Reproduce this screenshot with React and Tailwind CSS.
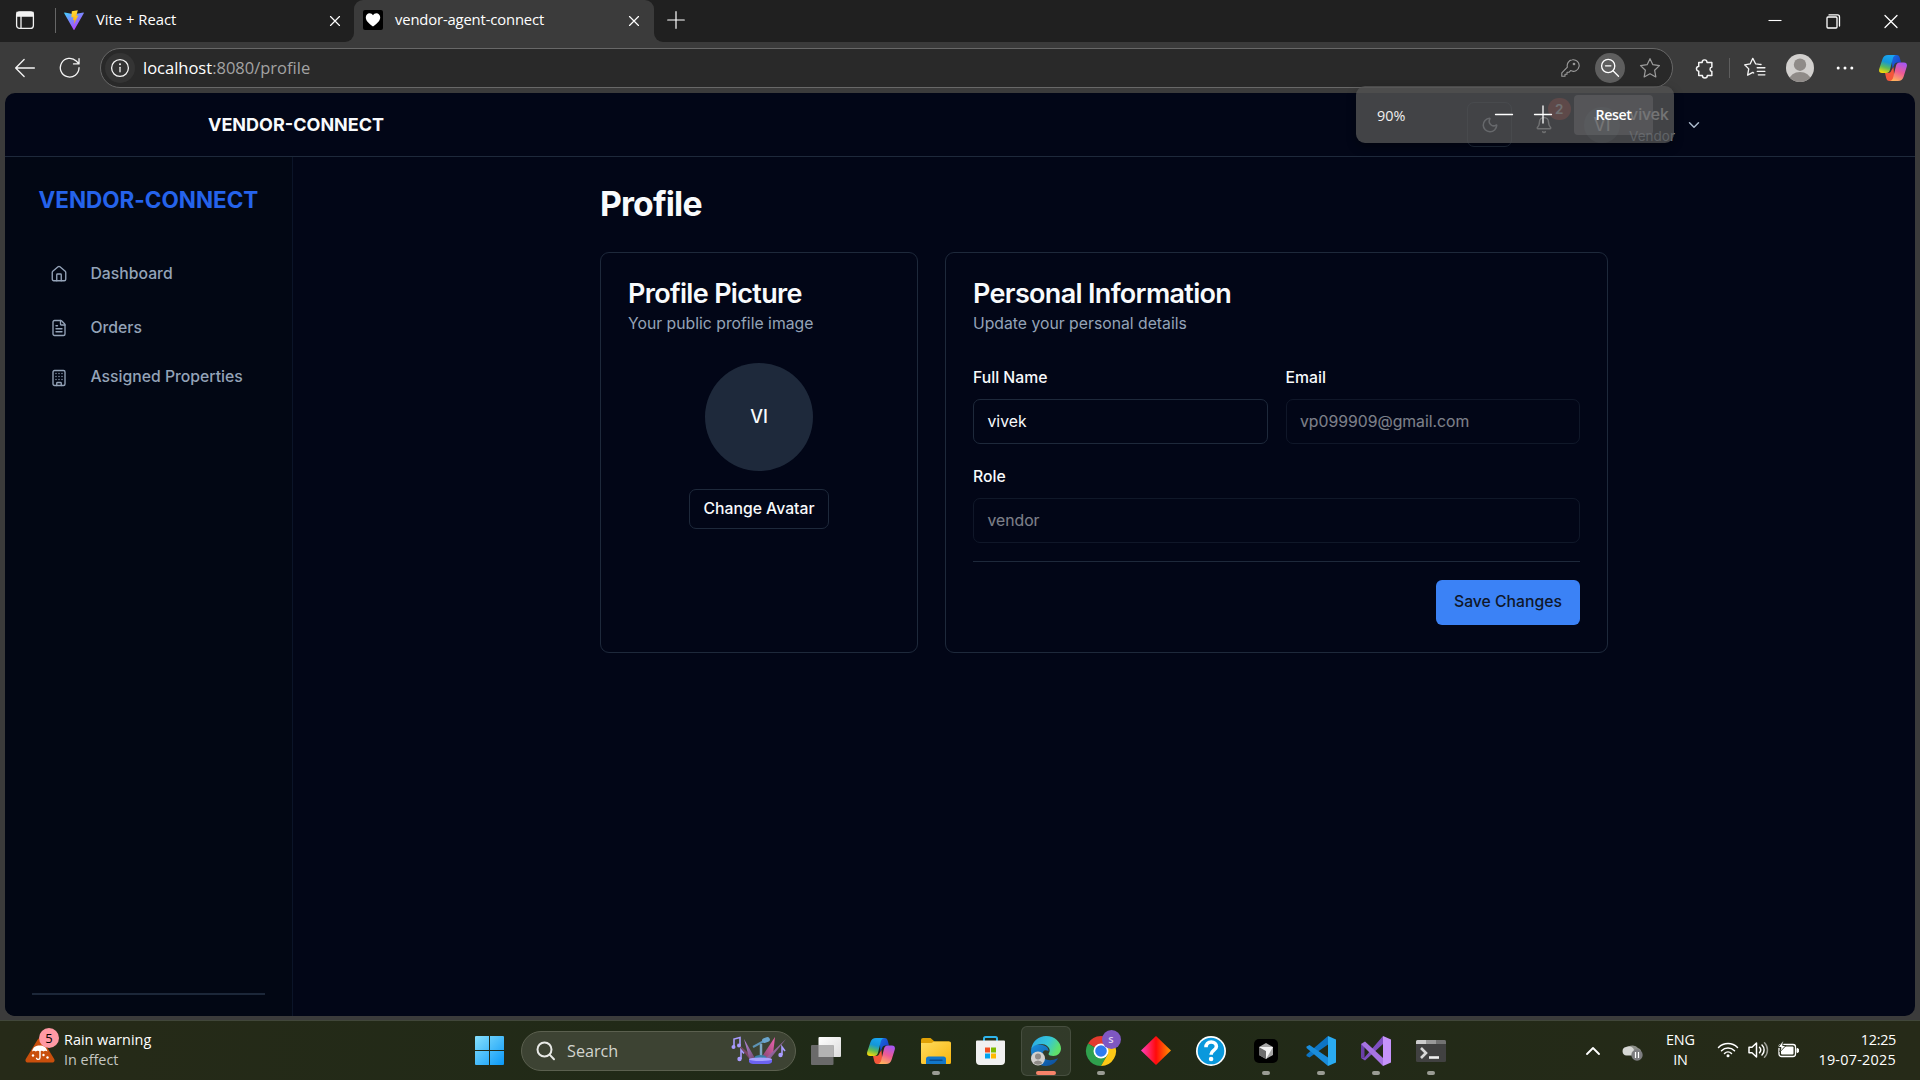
import React from "react";
import { House, FileText, Building, Moon, Bell, ChevronDown } from "lucide-react";

function Line({ size = 20, w = 1.2, className = "", children }) {
  return (
    <svg width={size} height={size} viewBox="0 0 20 20" fill="none" stroke="currentColor" strokeWidth={w} strokeLinecap="round" strokeLinejoin="round" className={className}>
      {children}
    </svg>
  );
}

const Close = ({ size = 20 }) => (
  <Line size={size} w={1.3}><path d="M5 5l10 10M15 5L5 15" /></Line>
);

function CopilotLogo({ id, size }) {
  return (
    <svg width={size} height={size} viewBox="0 -1 28 28">
      <defs>
        <linearGradient id={id + "a"} x1="0.6" y1="0" x2="0.3" y2="1">
          <stop offset="0" stopColor="#19a5f2" /><stop offset=".4" stopColor="#1496d8" /><stop offset=".7" stopColor="#5dbb58" /><stop offset="1" stopColor="#f5d90a" />
        </linearGradient>
        <linearGradient id={id + "b"} x1="0.7" y1="0" x2="0.3" y2="1">
          <stop offset="0" stopColor="#a656f2" /><stop offset=".5" stopColor="#ee5a94" /><stop offset="1" stopColor="#ffb35c" />
        </linearGradient>
        <linearGradient id={id + "c"} x1="0" y1="0" x2="1" y2="1">
          <stop offset="0" stopColor="#1a6fe0" /><stop offset="1" stopColor="#1a34c4" />
        </linearGradient>
      </defs>
      <path d="M12.500 0h5c2 0 2.800 1.200 3.300 3l1.200 4.500h-3.500c-2 0-3 1-3.600 3L13.500 14z" fill={"url(#" + id + "c)"} />
      <path d="M15.500 26h-5c-2 0-2.800-1.200-3.300-3L6 18h3c2 0 3-1 3.600-3l1.900-3z" fill="#f4573b" />
      <path d="M9 0h8c-2 .5-2.800 2-3.300 4l-2.500 10c-.6 2.600-1.700 4-4.200 4H3C.5 18-.3 16.200.2 14L3.500 4C4.500 1.300 6 0 9 0z" fill={"url(#" + id + "a)"} />
      <path d="M19 26h-8c2-.5 2.800-2 3.300-4l2.500-10.500c.6-2.600 1.700-4 4.200-4h4c2.500 0 3.300 1.800 2.800 4L24.500 22c-1 2.700-2.500 4-5.500 4z" fill={"url(#" + id + "b)"} />
    </svg>
  );
}

function ViteLogo() {
  return (
    <svg width="20" height="20" viewBox="0 0 20 20">
      <defs>
        <linearGradient id="va" x1="0" y1="0" x2=".7" y2="1"><stop stopColor="#41d1ff" /><stop offset="1" stopColor="#bd34fe" /></linearGradient>
        <linearGradient id="vb" x1=".4" y1="0" x2=".5" y2="1"><stop stopColor="#ffdd35" /><stop offset="1" stopColor="#ffa800" /></linearGradient>
      </defs>
      <path d="M19.800 3.200L10.400 19.700c-.2.300-.6.300-.8 0L.2 3.200c-.2-.3.100-.7.500-.6l9.300 1.600 9.300-1.600c.4-.1.700.3.500.6z" fill="url(#va)" />
      <path d="M13.800.200L7.800 1.300l-.4 6.200 2 -.4-.5 3.200 1.700-.5-.9 4.600 4.600-9-2 .4z" fill="url(#vb)" />
    </svg>
  );
}

function TabBar() {
  return (
    <div className="flex h-[42px] shrink-0 bg-[#3b3b3b] text-[14.800px]">
      <div className="flex w-[354px] items-center rounded-br-[9px] bg-[#202020] pb-[2px] pl-[15px]">
        <svg width="20" height="20" viewBox="0 0 20 20" fill="none" stroke="#f2f2f2" strokeWidth="1.300">
          <rect x="1.600" y="1.800" width="16.800" height="16.600" rx="3" />
          <path d="M2 2.500h16v3.500H2z" fill="#f2f2f2" />
          <path d="M6 6v12" />
        </svg>
        <div className="ml-5 h-[25px] w-px bg-[#666]" />
        <div className="ml-2"><ViteLogo /></div>
        <span className="mb-[2px] ml-3">Vite + React</span>
        <div className="ml-auto mr-[10px] mt-px"><Close size={18} /></div>
      </div>
      <div className="w-[300px] bg-linear-to-b from-[#202020] from-50% to-[#3b3b3b] to-50%">
        <div className="flex h-full items-center rounded-t-[9px] bg-[#3b3b3b] pb-[2px] pl-[9px]">
          <svg width="20" height="20" viewBox="0 0 20 20">
            <rect width="20" height="20" rx="2" fill="#000" />
            <path d="M10 16.500C5 12.800 2.800 10.600 2.800 7.300c0-2.400 1.700-4.100 3.800-4.100 1.500 0 2.700.8 3.400 2 .7-1.200 1.900-2 3.400-2 2.100 0 3.800 1.700 3.800 4.100 0 3.300-2.200 5.500-7.200 9.200z" fill="#fff" />
          </svg>
          <span className="mb-[2px] ml-3 tracking-[-0.150px]">vendor-agent-connect</span>
          <div className="ml-auto mr-[11px] mt-px"><Close size={18} /></div>
        </div>
      </div>
      <div className="flex flex-1 items-center rounded-bl-[9px] bg-[#202020] pl-[12px]">
        <Line size={20} w={1.2} className="mb-[3px]"><path d="M10 1.700v16.600M1.700 10h16.600" /></Line>
        <div className="ml-auto flex items-center gap-[38px] pr-[19px]">
          <Line size={20} w={1.1}><path d="M3.500 9.500h13" strokeLinecap="butt" /></Line>
          <Line size={20} w={1.3}><rect x="4" y="6" width="10" height="11" rx="1" /><path d="M6 3.900h8.500a2 2 0 0 1 2 2V15" /></Line>
          <Line size={20} w={1.3}><path d="M4 4.500l12 12M16 4.500l-12 12" /></Line>
        </div>
      </div>
    </div>
  );
}

function Toolbar() {
  return (
    <div className="flex h-[51px] shrink-0 items-center bg-[#3b3b3b] pt-px text-[#f5f5f5]">
      <Line size={22} w={1.2} className="ml-[14px]"><path d="M18.500 10H1.500M9.200 2.200L1.500 10l7.700 7.800" /></Line>
      <Line size={22} w={1.2} className="ml-[23px]"><path d="M18.200 9.800A8.500 8.500 0 1 1 15.700 3.700L18 6M18.200 1.500V6.300H13.200" /></Line>
      <div className="ml-[19px] flex h-10 w-[1573px] items-center rounded-full border border-[#686868] bg-[#292929] pl-1">
        <div className="flex size-[30px] items-center justify-center rounded-full bg-[#343434]">
          <Line size={20} w={1.3}><circle cx="10" cy="10" r="8.400" /><path d="M10 9.300v4.500" /><circle cx="10" cy="6.300" r=".4" fill="currentColor" /></Line>
        </div>
        <span className="ml-2 text-[16.500px] leading-6 text-[#a3a3a3]"><span className="text-white">localhost</span>:8080/profile</span>
        <div className="ml-auto flex items-center pr-[11px] text-[#9c9c9c]">
          <Line size={20} w={1.1}><path d="M12.300 1.800a5.800 5.800 0 1 1-1.700 10.800L9 14.300H7v2H5v2H1.800v-3.500l5.600-5.700A5.800 5.800 0 0 1 12.300 1.800z" /><circle cx="14" cy="6" r=".8" /></Line>
          <div className="ml-[15px] flex size-[30px] items-center justify-center rounded-full bg-[#5e5e5e] text-white">
            <Line size={20} w={1.3}><circle cx="8.200" cy="8" r="6.600" /><path d="M5.500 7.800h5.400M13 12.700l5.500 5.500" /></Line>
          </div>
          <Line size={22} w={1.1} className="ml-[14px]"><path d="M10 1.500l2.600 5.500 6 .8-4.400 4.200 1.100 6.100-5.300-2.900-5.300 2.900 1.100-6.100L1.400 7.800l6-.8z" /></Line>
        </div>
      </div>
      <Line size={21} w={1.400} className="ml-[21px]"><path d="M4.500 4.300h3.300a2.300 2.300 0 0 1 4.600-.4v.4H17v4.200a2.200 2.200 0 0 0 0 4.300v3.900h-4.300a2.300 2.300 0 0 1-4.700 0H4.500v-4.100a2.300 2.300 0 0 1-.5-4.500l.5-.1z" /></Line>
      <div className="ml-[14px] h-5 w-px bg-[#5e5e5e]" />
      <Line size={22} w={1.200} className="ml-[14px]"><path d="M13 6.500l-2.500-.3L8 1.200 5.600 6.300l-5 .8 3.700 3.700-1 5.700L8 14l.8.500M12 9.800h7M12 13h7M13 16.200h6M12.500 6.400l3 .4" /></Line>
      <svg width="28" height="28" viewBox="0 0 28 28" className="ml-5">
        <clipPath id="av"><circle cx="14" cy="14" r="14" /></clipPath>
        <g clipPath="url(#av)"><path d="M0 0h28v28H0z" fill="#d2d0ce" /><circle cx="14" cy="10.700" r="6.200" fill="#8f8b88" /><ellipse cx="14" cy="25.500" rx="10.500" ry="7.600" fill="#8f8b88" /></g>
      </svg>
      <svg width="18" height="4" viewBox="0 0 18 4" fill="#fff" className="ml-[22px]"><circle cx="2.200" cy="2" r="1.500" /><circle cx="9" cy="2" r="1.500" /><circle cx="15.800" cy="2" r="1.500" /></svg>
      <div className="ml-[25px]"><CopilotLogo id="tb" size={28} /></div>
    </div>
  );
}

function ZoomPopup() {
  return (
    <div className="absolute left-[1356px] top-[86px] z-20 flex h-[57px] w-[318px] items-center rounded-[9px] bg-[rgba(83,83,83,0.8)] pl-[21px] text-white shadow-[0_4px_10px_rgba(0,0,0,0.35)]">
      <span className="mt-[2px] w-[30px] text-[14.400px] text-[#f0f0f0]">90%</span>
      <Line size={20} w={1.3} className="ml-[87px]"><path d="M1.500 9.500h17" /></Line>
      <Line size={20} w={1.3} className="ml-[19px]"><path d="M1.500 9.500h17M10 1v17" /></Line>
      <div className="ml-[21px] flex h-10 w-[79px] items-center justify-center rounded bg-[#77787a59] text-[14.200px] font-semibold tracking-[-0.400px]">Reset</div>
    </div>
  );
}

function PageHeader() {
  return (
    <header className="flex h-16 shrink-0 items-center border-b border-[#1e293b] pl-[203px] pr-[212px] text-[#f8fafc]">
      <span className="text-lg leading-[27px] font-bold">VENDOR-CONNECT</span>
      <div className="ml-auto flex items-center">
        <div className="flex size-[45px] items-center justify-center rounded-[7px] border border-[#1e293b] text-[#b4bccb]"><Moon size={18} /></div>
        <div className="relative ml-[9px] flex size-[45px] items-center justify-center text-[#dfe4ec]">
          <Bell size={18} />
          <span className="absolute -right-[4.500px] -top-[4.500px] flex size-[22.500px] items-center justify-center rounded-full bg-[#8d2323] text-[13.500px] font-semibold">2</span>
        </div>
        <div className="ml-[18px] flex size-9 items-center justify-center rounded-full bg-[#1e293b] text-lg">VI</div>
        <div className="ml-[9px] flex flex-col">
          <span className="text-[15.750px] leading-[22.500px] font-medium">vivek</span>
          <span className="text-[13.500px] leading-[18px] text-[#94a3b8]">Vendor</span>
        </div>
        <ChevronDown size={18} className="ml-[10px] text-[#a9b7ca]" />
      </div>
    </header>
  );
}

function Sidebar() {
  return (
    <aside className="flex w-[288px] shrink-0 flex-col border-r border-[#0b1428] bg-[#020714] pt-[27px] text-[15.750px] font-medium text-[#94a3b8]">
      <div className="pl-[33.500px] text-[22.500px] leading-[31.500px] font-bold tracking-[-0.020px] text-[#2563eb]">VENDOR-CONNECT</div>
      <nav className="mt-[31.500px] pl-[45px]">
        <div className="flex h-[54px] items-center gap-[22.500px]"><House size={18} strokeWidth={1.8} />Dashboard</div>
        <div className="flex h-[54px] items-center gap-[22.500px]"><FileText size={18} strokeWidth={1.8} />Orders</div>
        <div className="flex h-11 items-center gap-[22.500px]"><Building size={18} strokeWidth={1.8} className="mt-px" />Assigned Properties</div>
      </nav>
      <div className="mt-auto mb-[21px] ml-[27px] mr-[27px] h-[2px] bg-[#1c2739]" />
    </aside>
  );
}

function CardHead({ title, sub }) {
  return (
    <div className="flex flex-col gap-[6.750px] p-[27px]">
      <h3 className="text-[27px] leading-[27px] font-semibold tracking-tight">{title}</h3>
      <p className="text-[15.750px] leading-[22.500px] text-[#94a3b8]">{sub}</p>
    </div>
  );
}

function Field({ label, value, disabled }) {
  return (
    <div className="text-lg leading-[27px]">
      <div className="h-[27px]"><label className="text-[15.750px] font-medium">{label}</label></div>
      <div className={"mt-[9px] flex h-[45px] items-center rounded-[7px] border border-[#1e293b] px-[13.500px] pt-[1.500px] text-[15.750px] leading-[22.500px] " + (disabled ? "opacity-50" : "")}>{value}</div>
    </div>
  );
}

function Profile() {
  return (
    <main className="flex-1 pt-[27px]">
      <div className="mx-auto w-[1008px]">
        <h1 className="text-[33.750px] leading-[40.500px] font-bold tracking-tight">Profile</h1>
        <div className="mt-[27px] grid grid-cols-3 gap-[27px]">
          <section className="rounded-[9px] border border-[#1e293b]">
            <CardHead title="Profile Picture" sub="Your public profile image" />
            <div className="flex flex-col items-center gap-[18px]">
              <div className="flex size-[108px] items-center justify-center rounded-full bg-[#1e293b] text-lg leading-[27px] font-[450]">VI</div>
              <div className="flex h-[40.500px] items-center rounded-[7px] border border-[#1e293b] px-[13.500px] text-[15.750px] leading-[22.500px] font-medium">Change Avatar</div>
            </div>
          </section>
          <section className="col-span-2 rounded-[9px] border border-[#1e293b]">
            <CardHead title="Personal Information" sub="Update your personal details" />
            <div className="px-[27px] pb-[27px]">
              <div className="grid grid-cols-2 gap-[18px]">
                <Field label="Full Name" value="vivek" />
                <Field label="Email" value="vp099909@gmail.com" disabled />
                <div className="col-span-2"><Field label="Role" value="vendor" disabled /></div>
              </div>
              <div className="my-[18px] h-px bg-[#1e293b]" />
              <div className="flex justify-end">
                <div className="flex h-[45px] items-center rounded-[6px] bg-[#3b82f6] px-[18px] pb-px text-[15.750px] leading-[22.500px] font-medium text-[#0f172a]">Save Changes</div>
              </div>
            </div>
          </section>
        </div>
      </div>
    </main>
  );
}

function AppSlot({ dot, active, children }) {
  return (
    <div className="flex w-[55px] justify-center">
      <div className={"relative flex h-[50px] w-[50px] items-center justify-center rounded-[6px] " + (active ? "border border-white/10 bg-white/8" : "")}>
        {children}
        {dot && <span className="absolute bottom-[1px] h-1 w-2 rounded-full bg-[#9a9c94]" />}
        {active && <span className="absolute bottom-0 h-1 w-5 rounded-full bg-[#f7836a]" />}
      </div>
    </div>
  );
}

function Concert() {
  return (
    <svg width="56" height="30" viewBox="0 0 56 30">
      <defs>
        <linearGradient id="r1" x1="0" y1="0" x2="1" y2="1"><stop stopColor="#b78ae0" /><stop offset="1" stopColor="#6c4160" /></linearGradient>
        <linearGradient id="r2" x1="1" y1="0" x2="0" y2="1"><stop stopColor="#f062b0" /><stop offset="1" stopColor="#7a4468" /></linearGradient>
      </defs>
      <path d="M5 6l19 17-4 2z" fill="#7c4764" /><path d="M13 3l12 21-6 1z" fill="url(#r1)" />
      <path d="M44 1l-2 17-9 7-3-3z" fill="url(#r2)" /><path d="M55 3L39 23l-6 1z" fill="url(#r1)" />
      <path d="M30 8v14" stroke="#7fa8c4" strokeWidth="2.500" /><path d="M22 11l11-6" stroke="#5d93b5" strokeWidth="2" />
      <rect x="31" y="1.500" width="8" height="5" rx="2.500" transform="rotate(-20 35 4)" fill="#6aa5cd" />
      <ellipse cx="29.500" cy="21.500" rx="6" ry="2.500" fill="#3c7fa8" />
      <path d="M18 23h23v2.500c0 1.500-2 2.500-4 2.500H22c-2 0-4-1-4-2.500z" fill="#6c63f0" /><ellipse cx="29.500" cy="23.300" rx="11.500" ry="1.700" fill="#a8a2ff" />
      <g fill="none" stroke="#a99cff" strokeWidth="1.600"><path d="M3 11V3l6-1.500V9M10 23v-9l3 3.500M51 19v-8l3 4" /></g>
      <g fill="#a99cff"><circle cx="2.500" cy="11" r="2" /><circle cx="8" cy="9.500" r="2" /><circle cx="8.500" cy="23" r="2.200" /><circle cx="49.500" cy="19" r="2.200" /></g>
    </svg>
  );
}

function Taskbar() {
  return (
    <footer className="flex h-[60px] shrink-0 items-center border-t border-[#41473a] bg-linear-to-r from-[#262a18] via-[#1f2a17] via-45% to-[#262a18] text-[14.400px] leading-5 text-white">
      <div className="flex w-[475px] items-center pl-[25px]">
        <div className="relative mr-[9px] mt-[-1px] h-[26px] w-[30px]">
          <svg width="30" height="26" viewBox="0 0 30 26">
            <path d="M12.700 2.500c1-1.700 3.600-1.700 4.600 0l11.900 19.400c1 1.700-.2 3.600-2.200 3.600H3c-2 0-3.200-1.900-2.200-3.600z" fill="#c94f0c" />
            <path d="M7 14.500C8 10 11 8.500 14.700 8.500S21.500 10 22.500 14.500c-1.500-1-2.600-1-3.900 0-1.200-1-2.600-1-3.900 0-1.200-1-2.600-1-3.900 0-1.300-1-2.400-1-3.800 0z" fill="#fff" />
            <path d="M15 13v7.500c0 2.500-3.500 2.500-3.500.3" fill="none" stroke="#fff" strokeWidth="1.400" />
            <g fill="#fff"><circle cx="8" cy="18.500" r="1.200" /><circle cx="18.500" cy="18" r="1.200" /><circle cx="22.500" cy="20.500" r="1.200" /></g>
          </svg>
          <span className="absolute left-[14px] top-[-9px] flex size-5 items-center justify-center rounded-full bg-[#ff99a4] text-[13px] text-black">5</span>
        </div>
        <div className="flex flex-col pb-px"><span>Rain warning</span><span className="text-[#c4c6c0]">In effect</span></div>
      </div>
      <svg width="29" height="29" viewBox="0 0 29 29">
        <defs><linearGradient id="win" x1="0" y1="0" x2="1" y2="1"><stop stopColor="#86e0fd" /><stop offset="1" stopColor="#0a98f7" /></linearGradient></defs>
        <path d="M1 0h13v14H0V1a1 1 0 0 1 1-1zM15 0h13a1 1 0 0 1 1 1v13H15zM0 15h14v14H1a1 1 0 0 1-1-1zM15 15h14v13a1 1 0 0 1-1 1H15z" fill="url(#win)" />
      </svg>
      <div className="ml-[17px] flex h-10 w-[275px] items-center rounded-full border border-[#5b604f] bg-[#3d4333] pl-[14px] pr-[8px]">
        <svg width="20" height="20" viewBox="0 0 20 20" fill="none" stroke="#e8e9e6" strokeWidth="2" strokeLinecap="round"><circle cx="8.500" cy="8.500" r="7" /><path d="M13.600 13.600l4.400 4.600" /></svg>
        <span className="ml-[11px] text-[16.200px] text-[#d3d5cf]">Search</span>
        <div className="ml-auto"><Concert /></div>
      </div>
      <div className="ml-[2px] flex items-center">
        <AppSlot>
          <svg width="30" height="28" viewBox="0 0 30 28"><defs><linearGradient id="tv" x1="0" y1="0" x2="1" y2="1"><stop stopColor="#fff" /><stop offset="1" stopColor="#dcdcdc" /></linearGradient></defs><rect x="7.500" width="22.500" height="20" rx="1" fill="url(#tv)" /><rect y="8" width="22.500" height="20" rx="1" fill="#6a6a6a" /><rect x="7.500" y="8" width="15" height="12" fill="#b3b3b3" /></svg>
        </AppSlot>
        <AppSlot><CopilotLogo id="tk" size={28} /></AppSlot>
        <AppSlot dot>
          <svg width="30" height="28" viewBox="0 0 30 28"><defs><linearGradient id="fo" x1="0" y1="0" x2="1" y2="1"><stop stopColor="#ffdc5e" /><stop offset="1" stopColor="#f8b50d" /></linearGradient></defs><path d="M0 3a2 2 0 0 1 2-2h7.500l4 3.500H28V12H0z" fill="#e0a106" /><path d="M0 6h10.500l2.500-1.500h15.500A1.500 1.500 0 0 1 30 6v19.500a1.500 1.500 0 0 1-1.500 1.500h-27A1.500 1.500 0 0 1 0 25.500z" fill="url(#fo)" /><path d="M5 27v-5a2.500 2.500 0 0 1 2.500-2.500h15A2.500 2.500 0 0 1 25 22v5z" fill="#1277c9" /><path d="M9 23.200h12" stroke="#0a4b8c" strokeWidth="1.400" strokeLinecap="round" /></svg>
        </AppSlot>
        <AppSlot>
          <svg width="29" height="29" viewBox="0 0 29 29"><path d="M8 6V2.500A1.500 1.500 0 0 1 9.500 1h10A1.500 1.500 0 0 1 21 2.500V6" fill="none" stroke="#2fb5ec" strokeWidth="2" /><path d="M0 5.500A1 1 0 0 1 1 4.500h27a1 1 0 0 1 1 1V25a4 4 0 0 1-4 4H4a4 4 0 0 1-4-4z" fill="#f1f1f1" /><path d="M9 11.500h5v5H9z" fill="#f25022" /><path d="M15 11.500h5v5h-5z" fill="#7fba00" /><path d="M9 17.500h5v5H9z" fill="#00a4ef" /><path d="M15 17.500h5v5h-5z" fill="#ffb900" /></svg>
        </AppSlot>
        <AppSlot active>
          <svg width="30" height="30" viewBox="0 0 30 30">
            <defs>
              <linearGradient id="e1" x1="0" y1="0" x2="1" y2=".4"><stop stopColor="#2aa5e6" /><stop offset=".6" stopColor="#35c6d8" /><stop offset="1" stopColor="#5fe06a" /></linearGradient>
              <linearGradient id="e2" x1="0" y1="0" x2="1" y2="1"><stop stopColor="#1b8fdd" /><stop offset="1" stopColor="#0c4a98" /></linearGradient>
            </defs>
            <path d="M.2 13C2 7 8 8 13 9.500c4 1.200 4.500 4 4.500 5.500-4-2-6 0-6 3.500 0 4.500 6 8 15.500 3.800-2.500 5-7 7.700-12 7.700C6.500 30 0 23.500 0 15z" fill="url(#e2)" />
            <path d="M.200 13C1.500 5 8 0 15 0c9 0 15 6.500 15 12.500 0 4.500-3.500 7.500-7.500 7.500-3 0-5-1-5-2 0-.8 1.200-1.300 1.200-3.500 0-3-3.200-6.500-8.700-6.500C5 8 1.500 10.500.2 13z" fill="url(#e1)" />
            <circle cx="7" cy="22.500" r="7" fill="#d2d0ce" /><circle cx="7" cy="20.500" r="3" fill="#8f8b88" /><path d="M2.500 27a4.800 4 0 0 1 9 0 7 7 0 0 1-9 0z" fill="#8f8b88" />
          </svg>
        </AppSlot>
        <AppSlot dot>
          <svg width="30" height="30" viewBox="0 0 30 30" className="overflow-visible">
            <path d="M2 7.500A15 15 0 0 1 28 7.500L15 15z" fill="#e33b2e" /><path d="M2 7.500A15 15 0 0 0 15 30l6.500-11.200L15 15z" fill="#2fa04d" /><path d="M28 7.500A15 15 0 0 1 15 30l6.500-11.200V7.500z" fill="#fcc816" /><path d="M2 7.500h26L15 8.200z" fill="#e33b2e" />
            <circle cx="15" cy="15" r="7.500" fill="#fff" /><circle cx="15" cy="15" r="5.800" fill="#2f7bee" />
          </svg>
          <span className="absolute left-[26px] top-[4px] flex size-[19px] items-center justify-center rounded-full bg-[#7e57c2] text-[11px] font-semibold text-[#ded2f2]">s</span>
        </AppSlot>
        <AppSlot><svg width="30" height="29" viewBox="0 0 30 29"><defs><linearGradient id="di"><stop stopColor="#ff3fc0" /><stop offset=".5" stopColor="#ff0a0a" /><stop offset="1" stopColor="#ff9500" /></linearGradient></defs><path d="M15 0l15 14.500L15 29 0 14.500z" fill="url(#di)" /></svg></AppSlot>
        <AppSlot>
          <svg width="30" height="30" viewBox="0 0 30 30"><circle cx="15" cy="15" r="15" fill="#fff" /><circle cx="15" cy="15" r="13.300" fill="#0a98dc" /><path d="M10 11.300C10 8 12 6 15.200 6s5.200 1.800 5.200 4.500c0 3.800-5.200 4-5.200 7.500v.8" fill="none" stroke="#fff" strokeWidth="3.600" /><circle cx="15.100" cy="23" r="2.300" fill="#fff" /></svg>
        </AppSlot>
        <AppSlot dot>
          <svg width="24" height="24" viewBox="0 0 24 24"><rect width="24" height="24" rx="5" fill="#000" /><path d="M12 4l7 4v8l-7 4-7-4V8z" fill="#a8a8a8" /><path d="M5 8l7 4v8l-7-4z" fill="#6d6d6d" /><path d="M5 8h14l-7 12v-8z" fill="#f2f2f2" /></svg>
        </AppSlot>
        <AppSlot dot>
          <svg width="30" height="30" viewBox="0 0 30 30"><path d="M22 0v8.500L3.500 21.500 0.500 20v-1.500z" fill="#0d74c4" /><path d="M22 30v-8.500L3.500 9 .5 10.500V12z" fill="#1a8ddb" /><path d="M22 0l8 3.500v23L22 30z" fill="#2aabf2" /></svg>
        </AppSlot>
        <AppSlot dot>
          <svg width="30" height="30" viewBox="0 0 30 30"><path d="M0 8l3.500 1.500v12L0 22z" fill="#6a3ea8" /><path d="M4 24.500L0 22l3.500-.5L22 0v8z" fill="#7d4fc0" /><path d="M22 0l8 3.500v23L22 30z" fill="#c693fb" /><path d="M4 5.500L22 22v8L0 8z" fill="#a774e2" /></svg>
        </AppSlot>
        <AppSlot dot>
          <svg width="30" height="22" viewBox="0 0 30 22"><rect width="30" height="22" rx="1.500" fill="#414141" /><path d="M1.500 0H10v4H0V1.500A1.500 1.500 0 0 1 1.500 0z" fill="#ccc" /><path d="M10 0h10v4H10z" fill="#999" /><path d="M20 0h8.500A1.500 1.500 0 0 1 30 1.500V4H20z" fill="#727272" /><path d="M5 8l5 5-5 5" fill="none" stroke="#d8d8d8" strokeWidth="2.600" /><path d="M13 17.500h10" stroke="#f0f0f0" strokeWidth="2.600" /></svg>
        </AppSlot>
      </div>
      <div className="ml-auto flex items-center pr-6 pb-px">
        <svg width="14" height="9" viewBox="0 0 14 9" fill="none" stroke="#fff" strokeWidth="1.800" strokeLinecap="round" strokeLinejoin="round"><path d="M1 8l6-6 6 6" /></svg>
        <svg width="21" height="19" viewBox="0 0 21 19" className="ml-[22px] mt-[2px]"><path d="M5 7a6 5 0 0 1 11-1 4 4 0 0 1 3 5L12 13z" fill="#8e908a" /><path d="M4.500 13.500A4.300 4.300 0 0 1 4 5a6 6 0 0 1 7 1l4 7.500z" fill="#d6d7d4" /><circle cx="15" cy="13" r="5.700" fill="#7d7d80" /><path d="M13.500 10v6M16.500 10v6" stroke="#fff" strokeWidth="1.200" /></svg>
        <div className="ml-[22px] flex w-[30px] flex-col items-center tracking-[-0.200px]"><span>ENG</span><span>IN</span></div>
        <svg width="22" height="18" viewBox="0 0 22 18" fill="none" stroke="#fff" strokeWidth="1.500" strokeLinecap="round" className="ml-[22px] mb-px"><path d="M1.500 6.500a13.400 13.400 0 0 1 19 0M4.500 9.700a9.200 9.200 0 0 1 13 0M7.500 12.500a5 5 0 0 1 7 0" /><circle cx="11" cy="14.800" r="1.500" fill="#fff" stroke="none" /></svg>
        <svg width="21" height="18" viewBox="0 0 21 18" fill="none" stroke="#fff" strokeWidth="1.500" strokeLinecap="round" strokeLinejoin="round" className="ml-[9px]"><path d="M1 6.200h3L8.500 2v14L4 11.800H1zM11.500 6.300a4 4 0 0 1 0 5.400M14 4a7 7 0 0 1 0 10" /><path d="M16.500 1.700a10.500 10.500 0 0 1 0 14.600" stroke="#9a9c94" /></svg>
        <svg width="21" height="18" viewBox="0 0 21 18" className="ml-[9px] mb-[2px]"><rect x="1" y="4.500" width="16.500" height="12" rx="2.500" fill="none" stroke="#fff" strokeWidth="1.300" /><rect x="3" y="6.500" width="12.500" height="8" rx="1" fill="#fff" /><path d="M19 8.500v4a1.500 1.500 0 0 0 0-4z" fill="#fff" stroke="#fff" /><path d="M5.500 0L0 7.500h3L1.800 12 8 5.500H4.700z" fill="#fff" stroke="#222a18" strokeWidth=".9" /></svg>
        <div className="ml-[19px] flex flex-col items-end"><span className="tracking-[-0.300px]">12:25</span><span className="tracking-[0.250px]">19-07-2025</span></div>
      </div>
    </footer>
  );
}

export default function App() {
  return (
    <div className="relative flex h-screen w-full flex-col overflow-hidden bg-[#3b3b3b] font-['Open_Sans','Noto_Sans',sans-serif] text-white">
      <TabBar />
      <Toolbar />
      <ZoomPopup />
      <div className="mx-[5px] mb-1 flex min-h-0 flex-1 flex-col overflow-hidden rounded-[10px] bg-[#020617] font-['Inter',sans-serif] text-[#f8fafc]">
        <PageHeader />
        <div className="flex min-h-0 flex-1">
          <Sidebar />
          <Profile />
        </div>
      </div>
      <Taskbar />
    </div>
  );
}
